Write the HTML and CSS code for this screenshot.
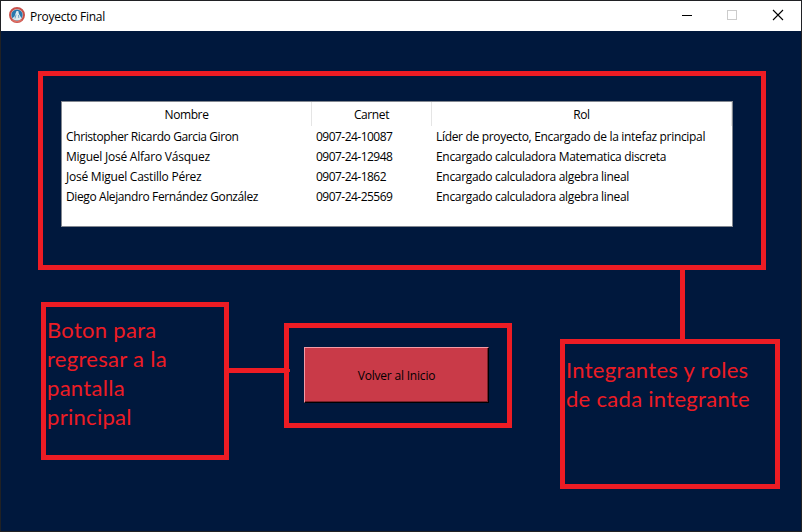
FILE: index.html
```html
<!DOCTYPE html>
<html lang="es">
<head>
<meta charset="utf-8">
<title>Proyecto Final</title>
<link rel="stylesheet" href="styles.css">
</head>
<body>
<div class="window">
  <header class="titlebar">
    <svg class="logo" width="16" height="16" viewBox="0 0 16 16">
      <circle cx="8" cy="8" r="7" fill="#e9d3cc" stroke="#c8514b" stroke-width="2"/>
      <circle cx="8" cy="8" r="5.6" fill="#2877ad"/>
      <path d="M3.3 11.2 5.5 9.5 6.5 6.5 7.5 4h1.8l.7 3 1.5 2.5 1.2 1.7-2 1.8H5.5Z" fill="#dce9ef"/>
      <path d="M7 7.5 6 11.5M9.5 8l.3 3" stroke="#74a5c4" fill="none"/>
      <path d="M3.5 13.2Q8 16 12.5 13.2" stroke="#df7064" stroke-width="1.4" fill="none"/>
    </svg>
    <span class="title">Proyecto Final</span>
    <svg class="controls" width="138" height="30" viewBox="0 0 138 30" fill="none">
      <path d="M19 14.5h10" stroke="#000"/>
      <rect x="64.500" y="9.500" width="9" height="9" stroke="#ccc"/>
      <path d="M110 9l10 10M120 9l-10 10" stroke="#000" stroke-width="1.100"/>
    </svg>
  </header>
  <main class="content">
    <table class="members">
      <thead><tr><th>Nombre</th><th>Carnet</th><th>Rol</th></tr></thead>
      <tbody>
        <tr><td class="long">Christopher Ricardo Garcia Giron</td><td class="id">0907-24-10087</td><td>Líder de proyecto, Encargado de la intefaz principal</td></tr>
        <tr><td class="name">Miguel José Alfaro Vásquez</td><td class="id">0907-24-12948</td><td>Encargado calculadora Matematica discreta</td></tr>
        <tr><td class="name">José Miguel Castillo Pérez</td><td class="id">0907-24-1862</td><td>Encargado calculadora algebra lineal</td></tr>
        <tr><td class="long">Diego Alejandro Fernández González</td><td class="id">0907-24-25569</td><td>Encargado calculadora algebra lineal</td></tr>
      </tbody>
    </table>
    <button class="back">Volver al Inicio</button>
  </main>
  <div class="mark mark-table"></div>
  <div class="mark mark-button"></div>
  <div class="mark note note-button">Boton para<br>regresar a la<br>pantalla<br>principal</div>
  <div class="mark note note-table">Integrantes y roles<br>de cada integrante</div>
  <div class="link link-button"></div>
  <div class="link link-tip"></div>
  <div class="link link-table"></div>
</div>
</body>
</html>
```
FILE: styles.css
```css
* { box-sizing: border-box; }
body { margin: 0; background: #202124; font: 12px/20px "Open Sans", "Noto Sans", sans-serif; color: #000; }
.window { position: relative; width: 802px; height: 532px; border: 1px solid #202124; background: #00183d; overflow: hidden; }
.titlebar { display: flex; align-items: center; height: 30px; padding-left: 8px; background: #fff; }
.logo { margin-top: -2px; }
.title { margin-left: 5px; padding-top: 2px; flex: 1; letter-spacing: -0.27px; }
.content { display: flex; flex-direction: column; align-items: flex-start; padding: 70px 60px 0; }
.members { display: flex; flex-direction: column; width: 672px; height: 126px; border: 1px solid #828790; background: #fff; }
.members tr { display: grid; grid-template-columns: 250px 120px 300px; }
.members th { height: 24px; line-height: 24px; padding: 1px 0 0; font-weight: 400; border-right: 1px solid #e5e5e5; letter-spacing: -0.4px; }
.members td { height: 20px; padding: 1px 0 0 4px; white-space: nowrap; letter-spacing: -0.32px; }
.members .name { letter-spacing: -0.23px; }
.members .long { letter-spacing: -0.39px; }
.members .id { letter-spacing: -0.53px; }
.back { width: 185px; height: 56px; margin: 120px 0 0 243px; padding: 2px 0 0; border: 1px solid; border-color: #f49aa5 #000 #000 #f49aa5; background: #c93a48; box-shadow: inset -1px -1px #7a2029; font: inherit; letter-spacing: -0.2px; color: #000; }
.mark { position: absolute; border: 5px solid #ed1c24; }
.mark-table { left: 37px; top: 70px; width: 728px; height: 199px; }
.mark-button { left: 283px; top: 322px; width: 228px; height: 105px; }
.note { color: #ed1c24; font: 22px/29px Lato, sans-serif; letter-spacing: 0.3px; white-space: nowrap; }
.note-button { left: 40px; top: 301px; width: 188px; height: 158px; padding: 8px 0 0 1px; }
.note-table { left: 559px; top: 338px; width: 220px; height: 150px; padding: 11px 0 0 1px; }
.link { position: absolute; background: #ed1c24; }
.link-button { left: 228px; top: 367px; width: 60px; height: 5px; }
.link-tip { left: 288px; top: 368px; width: 1px; height: 3px; }
.link-table { left: 679px; top: 269px; width: 5px; height: 69px; }
```
